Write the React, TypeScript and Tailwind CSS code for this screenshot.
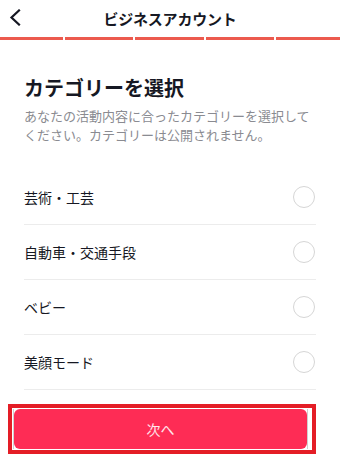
import React from "react";

const items = ["芸術・工芸", "自動車・交通手段", "ベビー", "美顔モード"];

export default function App() {
  return (
    <div
      className="w-[340px] h-[461px] bg-white overflow-hidden text-[#161823]"
      style={{ fontFamily: '"Noto Sans CJK JP", "Noto Sans", sans-serif' }}
    >
      {/* Header */}
      <div className="relative h-[36px] flex items-center justify-center">
        <svg
          className="absolute left-[8px] top-[9px]"
          width="14"
          height="17"
          viewBox="0 0 14 17"
          fill="none"
        >
          <path d="M11 1.5 L3.5 8.5 L11 15.5" stroke="#161823" strokeWidth="2.2" strokeLinecap="square" />
        </svg>
        <span className="text-[15px] font-bold leading-none tracking-[-0.2px]">ビジネスアカウント</span>
      </div>

      {/* Progress */}
      <div className="flex gap-[2px] h-[3px] mt-px">
        <div className="w-[63px] bg-[#ec5a4e]" />
        <div className="w-[68px] bg-[#ec5a4e]" />
        <div className="w-[69px] bg-[#ec5a4e]" />
        <div className="w-[68px] bg-[#ec5a4e]" />
        <div className="flex-1 bg-[#ec5a4e]" />
      </div>

      {/* Content */}
      <div className="px-6">
        <h1 className="mt-[34px] text-[20px] leading-[28px] font-bold text-[#161823]">カテゴリーを選択</h1>
        <p className="mt-[4px] text-[13px] leading-[19px] text-[#8a8b91]">
          あなたの活動内容に合ったカテゴリーを選択してください。カテゴリーは公開されません。
        </p>

        <div className="mt-[26px]">
          {items.map((t) => (
            <div key={t} className="h-[55px] flex items-center justify-between border-b border-[#ececec]">
              <span className="text-[14px] leading-none">{t}</span>
              <div className="w-[22px] h-[22px] rounded-full border border-[#d6d6d6] mr-px" />
            </div>
          ))}
        </div>
      </div>

      {/* Button with red annotation */}
      <div className="mt-[14px] ml-[8px] w-[308px] h-[50px] border-4 border-[#e41d26] bg-white pl-px pr-[4px] py-px flex">
        <div className="flex-1 border-x border-[#cfcfcf] flex">
          <button className="flex-1 rounded-[6px] bg-[#fe2c55] text-white/90 text-[14px] flex items-center justify-center">
            次へ
          </button>
        </div>
      </div>
    </div>
  );
}
